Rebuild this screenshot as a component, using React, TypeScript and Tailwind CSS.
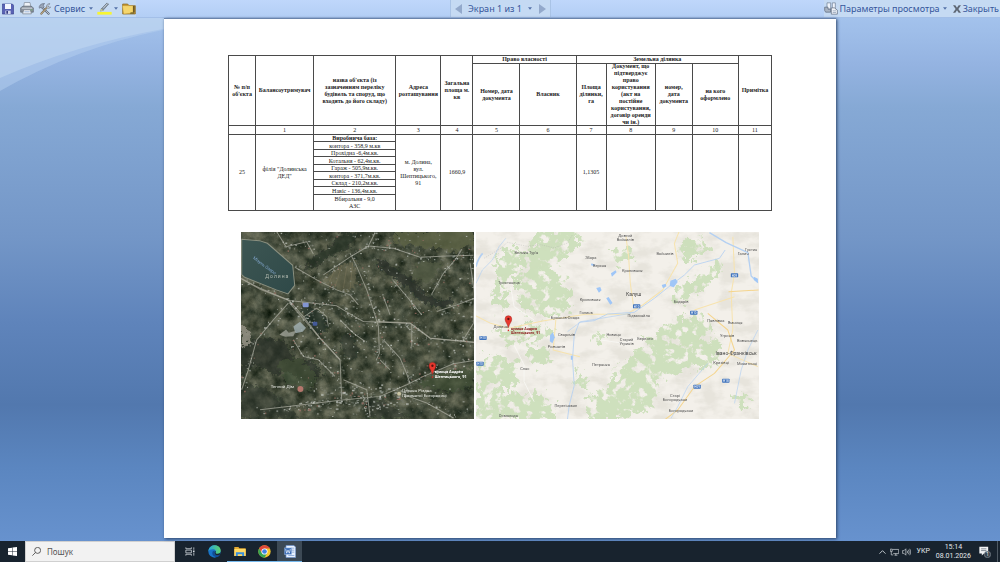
import type { ReactNode } from "react";

const columns = [27, 58, 82, 45, 32, 47, 56, 30, 49, 37, 46, 33];

const buildings = [
  "контора - 358,9 м.кв",
  "Прохідна -6,4м.кв.",
  "Котальня - 62,4м.кв.",
  "Гараж - 505,9м.кв.",
  "контора - 371,7м.кв.",
  "Склад - 210,2м.кв.",
  "Навіс - 136,4м.кв.",
];

const cell = "border border-[#4a4a4a] p-0 text-center align-middle";

const SaveIcon = () => (
  <svg viewBox="0 0 36 36" className="size-3" aria-hidden="true">
    <path d="M1 3h30l4 4v26H1z" fill="#5962b4" stroke="#3b438f" strokeWidth="2" />
    <path d="M9 3h18v15H9z" fill="#f3f5ff" />
    <path d="M10 23h16v10H10z" fill="#d3d8ee" />
    <path d="M13 24h5v8h-5z" fill="#333a80" />
  </svg>
);

const PrinterIcon = () => (
  <svg viewBox="0 0 42 38" className="h-[13px] w-3.5" aria-hidden="true">
    <path d="M11 15 13 1h17l3 14z" fill="#eef2f8" stroke="#7b8796" strokeWidth="2" />
    <path d="M2 17l7-5h24l7 5v13H2z" fill="#8a929d" stroke="#59616d" strokeWidth="2" />
    <path d="M5 18h32" stroke="#d6dbe2" strokeWidth="3" />
    <path d="M11 23h20l3 12H8z" fill="#f6f8fb" stroke="#6e7885" strokeWidth="2" />
    <path d="M13 29h16" stroke="#6b93c9" strokeWidth="2" />
    <circle cx="35" cy="23" r="2" fill="#68bf5b" />
  </svg>
);

const ToolsIcon = () => (
  <svg viewBox="0 0 40 36" className="h-3 w-3.5" fill="none" strokeLinecap="round" aria-hidden="true">
    <path d="M11 13 31 32" stroke="#59616e" strokeWidth="6" />
    <path d="M11 13 31 32" stroke="#c0c8d4" strokeWidth="3" />
    <path d="M28 11 9 32" stroke="#7c6d57" strokeWidth="6" />
    <path d="M28 11 9 32" stroke="#e2cda0" strokeWidth="2" />
    <path d="M3 10c2-6 9-9 16-8l-5 4 3 5-5 6-4-4-4 2z" fill="#9aa6b8" stroke="#626d7e" strokeWidth="2" />
    <path d="M34 2c-6-1-11 4-9 10s9 6 12 0l-6 1-3-4z" fill="#dfe6ef" stroke="#707b8c" strokeWidth="2" />
  </svg>
);

const PenIcon = () => (
  <svg viewBox="0 0 44 38" className="h-[13px] w-[15px]" aria-hidden="true">
    <path d="M1 29h42v8H1z" fill="#f7f531" />
    <path d="M13 20 29 3l5 3-15 17z" fill="#8e9aa7" stroke="#5c6873" strokeWidth="2" />
    <path d="m12 20 7 4-9 3z" fill="#e8e4a0" stroke="#606b60" strokeWidth="1" />
    <path d="m19 17 12-13" stroke="#dbe3ec" strokeWidth="2" />
  </svg>
);

const FolderIcon = () => (
  <svg viewBox="0 0 42 36" className="h-3 w-3.5" aria-hidden="true">
    <path d="M2 3h15l4 5h19v25H2z" fill="#c99a34" stroke="#7e611c" strokeWidth="2" />
    <path d="M1 8h32v22L5 33z" fill="#f5d66d" stroke="#b48a2b" strokeWidth="1" />
    <path d="M33 9v22l5-3V9z" fill="#6f5b25" />
    <path d="M26 28h10v5H24z" fill="#84702f" />
  </svg>
);

const ViewIcon = () => (
  <svg viewBox="0 0 42 38" className="h-[13px] w-3.5" aria-hidden="true">
    <path d="M9 2h11v19H9zM25 2h9v19h-9z" fill="#eef3fb" stroke="#68788f" strokeWidth="2" />
    <path d="M2 15h10v6h8v9H5l-3-5z" fill="#a8b3c2" stroke="#566477" strokeWidth="2" />
    <path d="M22 17h9l9 7v12H22z" fill="#f1f4f9" stroke="#566477" strokeWidth="2" />
    <path d="M26 26h10M26 31h10" stroke="#8495ad" strokeWidth="2" />
  </svg>
);

const Caret = () => (
  <svg viewBox="0 0 8 5" className="h-[3px] w-1" aria-hidden="true">
    <path d="M0 0h8L4 5z" fill="#5572a8" />
  </svg>
);

const WindowsLogo = () => (
  <svg viewBox="0 0 18 18" className="size-[9px]" fill="#fff" aria-hidden="true">
    <path d="M0 2.500 8 1.400v7.200H0zM9 1.200 18 0v8.600H9zM0 9.500h8v7.100l-8-1.100zM9 9.500h9V18l-9-1.200z" />
  </svg>
);

const TaskViewIcon = () => (
  <svg viewBox="0 0 28 26" className="h-[9px] w-2.5" fill="none" stroke="#e8edf2" strokeWidth="2" aria-hidden="true">
    <path d="M2 1v4h16V1M2 25v-4h16v4M2 9h16v8H2zM25 1v7M25 17v8" />
    <path d="M23 10h4v5h-4z" fill="#e8edf2" stroke="none" />
  </svg>
);

const EdgeIcon = () => (
  <svg viewBox="0 0 40 40" className="size-[13px]" aria-hidden="true">
    <defs>
      <linearGradient id="edgeTop" x1="0" x2="1">
        <stop stopColor="#25a5dd" />
        <stop offset="1" stopColor="#5fd36a" />
      </linearGradient>
    </defs>
    <circle cx="20" cy="20" r="19" fill="#1873c7" />
    <path d="M1 19C3 7 11 1 21 1c11 0 18 8 18 16 0 7-5 11-11 11-4 0-6-2-5-4 4-5 0-11-8-11C8 13 3 16 1 19z" fill="url(#edgeTop)" />
    <path d="M15 19c-5 8 1 18 13 18 4-1 7-3 9-7-8 4-19 1-18-8 0-2 1-3 2-4-2-1-4-1-6 1z" fill="#114c97" />
    <path d="M20 22c0-3 4-4 4-2l-1 4c0 4 10 5 15-1l-2 7c-8 4-17 0-16-8z" fill="#18222d" />
  </svg>
);

const ExplorerIcon = () => (
  <svg viewBox="0 0 38 32" className="h-[11px] w-3" aria-hidden="true">
    <path d="M1 2h13l3 4h20v24H1z" fill="#e3aa32" />
    <path d="M1 8h36v22H1z" fill="#ffd966" />
    <path d="M6 18h26v12h-6v-5H12v5H6z" fill="#398fdb" />
  </svg>
);

const ChromeIcon = () => (
  <svg viewBox="0 0 40 40" className="size-[13px]" aria-hidden="true">
    <circle cx="20" cy="20" r="19" fill="#f5c52c" />
    <path d="M3.500 10.500A19 19 0 0 1 36.500 10.500H20L11.800 24.800z" fill="#e0483a" />
    <path d="M3.500 10.500A19 19 0 0 0 20 39l8.200-14.200H11.800z" fill="#37a452" />
    <circle cx="20" cy="20" r="9.500" fill="#fff" />
    <circle cx="20" cy="20" r="7.200" fill="#3e82e4" />
  </svg>
);

const WordIcon = () => (
  <svg viewBox="0 0 36 38" className="h-[13px] w-3" aria-hidden="true">
    <path d="M6 1h24l5 5v31H6z" fill="#e8f1ff" stroke="#6990cc" strokeWidth="2" />
    <path d="M20 9h11M20 15h11M13 31h18M20 21h11" stroke="#6e93c8" strokeWidth="2" />
    <path d="M1 8h22v20H1z" fill="#3f70b8" stroke="#d8e7ff" strokeWidth="1" />
    <path d="m5 12 3 12 4-9 4 9 3-12" fill="none" stroke="#fff" strokeWidth="2" />
  </svg>
);

const Pin = ({ x, y }: { x: number; y: number }) => (
  <g transform={`translate(${x} ${y})`}>
    <path d="M0 0C-3-13-10-17-10-26a10 10 0 0 1 20 0C10-17 3-13 0 0z" fill="#e8382e" stroke="#a42720" strokeWidth="1.500" />
    <circle cy="-26" r="3.500" fill="#5e120f" />
    <circle cy="8" r="2.500" fill="#d22c25" />
  </g>
);

// small seeded generator, keeps the scattered houses in the same spots
const createRandom = (start: number) => {
  let seed = start;
  return () => {
    seed = (seed * 16807) % 2147483647;
    return seed / 2147483647;
  };
};

type Point = [number, number];

const streets: Point[][] = [
  [[0, 145], [60, 175], [148, 212], [290, 228], [340, 258], [370, 275], [510, 280], [570, 325], [705, 338]],
  [[148, 212], [190, 260], [240, 325], [300, 390], [305, 510]],
  [[330, 70], [350, 110], [380, 180], [400, 240], [415, 290], [418, 370], [408, 392]],
  [[165, 112], [230, 150], [290, 180], [330, 195], [355, 225]],
  [[405, 8], [385, 48], [335, 78], [250, 135]],
  [[385, 48], [460, 55], [540, 82], [620, 78], [700, 76]],
  [[575, 192], [610, 130], [645, 90], [665, 58]],
  [[460, 152], [500, 200], [545, 255]],
  [[60, 540], [150, 530], [300, 512], [420, 500], [500, 465], [550, 440], [640, 402], [703, 392]],
  [[145, 220], [100, 270], [50, 330], [25, 420], [5, 480]],
  [[110, 5], [138, 50], [200, 35], [220, 72]],
  [[190, 262], [230, 235], [260, 260], [265, 290]],
  [[430, 200], [450, 255]],
  [[430, 330], [480, 385], [500, 432], [510, 462]],
  [[515, 285], [515, 350]],
  [[590, 245], [650, 225], [703, 205]],
  [[690, 100], [703, 190], [700, 280], [668, 332]],
  [[500, 498], [560, 520], [640, 565]],
  [[300, 270], [340, 310], [375, 335]],
  [[160, 330], [190, 380], [235, 390], [285, 440]],
  [[420, 390], [450, 420]],
  [[310, 450], [380, 480], [390, 560]],
];

const buildHouses = () => {
  const random = createRandom(4217);
  const houses: { x: number; y: number; w: number; h: number; light: number }[] = [];
  streets.forEach((street) => {
    for (let i = 1; i < street.length; i++) {
      const [x1, y1] = street[i - 1];
      const [x2, y2] = street[i];
      const count = Math.round(Math.hypot(x2 - x1, y2 - y1) / 5);
      for (let n = 0; n < count; n++) {
        const t = random();
        houses.push({
          x: x1 + (x2 - x1) * t + (random() - 0.5) * 28,
          y: y1 + (y2 - y1) * t + (random() - 0.5) * 28,
          w: 2 + random() * 4,
          h: 2 + random() * 3,
          light: random(),
        });
      }
    }
  });
  for (let n = 0; n < 420; n++) {
    const x = 170 + random() * 530;
    const y = 10 + random() * 550;
    houses.push({ x, y, w: 2 + random() * 4, h: 2 + random() * 3, light: random() });
  }
  for (let n = 0; n < 130; n++) {
    houses.push({ x: 200 + random() * 300, y: 470 + random() * 70, w: 3 + random() * 6, h: 2 + random() * 5, light: random() });
  }
  return houses;
};

const houses = buildHouses();

const SatelliteMap = () => (
  <svg
    viewBox="3 6 700 562"
    preserveAspectRatio="none"
    className="h-[187px] w-0 grow-[233]"
    role="img"
    aria-label="Супутникова карта"
    fontFamily="Roboto, sans-serif"
  >
    <defs>
      <filter id="ground" x="0" y="0" width="100%" height="100%" colorInterpolationFilters="sRGB">
        <feTurbulence type="fractalNoise" baseFrequency="0.03" numOctaves="5" seed="8" />
        <feColorMatrix values="0.5 0.2 0 0 -0.07  0.45 0.2 0 0 -0.02  0.4 0.2 0 0 -0.06  0 0 0 0 1" />
      </filter>
      <filter id="rough" x="-20%" y="-20%" width="140%" height="140%">
        <feTurbulence type="fractalNoise" baseFrequency="0.08" numOctaves="4" seed="3" result="n" />
        <feDisplacementMap in="SourceGraphic" in2="n" scale="34" xChannelSelector="R" yChannelSelector="G" />
      </filter>
      <linearGradient id="lake" x1="0" x2="1" y2="1">
        <stop stopColor="#3d5653" />
        <stop offset="1" stopColor="#2f4948" />
      </linearGradient>
    </defs>
    <rect width="710" height="570" fill="#4a5343" />
    <rect width="710" height="570" filter="url(#ground)" opacity="0.9" />

    <g filter="url(#rough)">
      <path d="M462 5h240v38l-60 20-80-10-100-12z" fill="#5d6246" opacity="0.8" />
      <path d="m282 115 62-22 4 75-30 22-68-35z" fill="#6c6b52" opacity="0.6" />
      <path d="m540 90 70 10-40 60-60-20z" fill="#515a41" opacity="0.7" />
      <path d="m190 110 40-40 40-20 30-40h60l-45 50-55 22-40 38z" fill="#252e25" opacity="0.65" />
      <path d="m400 84 35 8 45 34 45 28 35 42 45 18 28-12 2 24-50 6-45-20-45-46-40-24-32-24z" fill="#27302a" opacity="0.7" />
      <path d="m0 345 60-20 70 5 28 50 62 20 30 35-40 25-60-30-50 5-50-30-50 40z" fill="#232c23" opacity="0.6" />
      <path d="m180 225 50 10 30 30 5 30-40 20-30-35z" fill="#222b23" opacity="0.6" />
      <path d="m0 460 80 15 60 50 40 40H0z" fill="#2a342a" opacity="0.5" />
      <path d="m300 320 30-10 25 45-10 40-35-20z" fill="#283129" opacity="0.5" />
      <path d="m380 500 60 15 60 50H380z" fill="#2a3429" opacity="0.5" />
      <path d="m110 395 70-10 50 45-10 50-80-15z" fill="#46553a" opacity="0.6" />
      <path d="m530 460 70-30 100-20v60l-80 20z" fill="#435239" opacity="0.7" />
      <path d="m3 285 20 10 10 35-30 25z" fill="#a19c92" opacity="0.7" />
    </g>
    <g stroke="#9a8d6c" strokeWidth="2" opacity="0.4">
      <path d="m270 120-20 35M288 112l-24 52M305 106l-20 65M322 100l-12 75M338 96l-8 82" />
    </g>

    <g fill="none" stroke="#a3a498" strokeWidth="3" opacity="0.8" strokeLinejoin="round">
      {streets.map((street, index) => (
        <polyline key={index} points={street.join(" ")} />
      ))}
    </g>
    <g fill="none" stroke="#adac9f" strokeWidth="4" opacity="0.6">
      <path d="M3 145 60 178l88 34M148 218l92 107 60 65M410 275l100 5 60 45 133 13" />
    </g>
    {houses.map((house, index) => (
      <rect
        key={index}
        x={house.x}
        y={house.y}
        width={house.w}
        height={house.h}
        fill={house.light > 0.93 ? "#9a6f64" : house.light > 0.45 ? "#c2c6c0" : "#868b82"}
        opacity={0.3 + house.light * 0.5}
      />
    ))}

    <path d="m5 28 53 4 24 8 76 66 6 60-20 26-35-12L14 142l-9-8z" fill="url(#lake)" stroke="#8b9080" strokeWidth="3" />
    <path d="m160 290 20-14 18 18-10 12-22 4z" fill="#a3b1b4" opacity="0.8" />
    <path d="m118 315 20-16 8 10 22-6-8 16-24 2z" fill="#a9aca3" opacity="0.7" />
    <rect x="188" y="219" width="18" height="13" rx="3" fill="#8295d2" />
    <rect x="218" y="276" width="14" height="12" rx="3" fill="#445a99" />
    <circle cx="181" cy="478" r="9" fill="#b4776c" />
    <circle cx="477" cy="492" r="6" fill="#c9c4a3" />

    <text x="38" y="86" fontSize="13" fill="#7fa3c8" transform="rotate(36 38 86)">
      Мізунь Озеро
    </text>
    <text x="76" y="143" fontSize="15" letterSpacing="3" fill="#b3bab0">
      Долина
    </text>
    <g fill="#e3e5df" fontSize="13">
      <text x="92" y="475">Теплий Дім</text>
      <text x="486" y="487">Церква Різдва</text>
      <text x="486" y="502">Пресвятої Богородиці</text>
    </g>
    <g fill="#fff" fontSize="12" fontWeight="700">
      <text x="584" y="431">вулиця Андрея</text>
      <text x="584" y="444">Шептицького, 91</text>
    </g>
    <Pin x={577} y={434} />
  </svg>
);

const towns: [number, number, string][] = [
  [453, 21, "Довгий"],
  [453, 33, "Войнилів"],
  [157, 71, "Велика Тур'я"],
  [350, 86, "Збора"],
  [376, 110, "Верхня"],
  [474, 127, "Кропивник"],
  [572, 75, "Войнилів"],
  [806, 75, "Галич"],
  [830, 62, "Густин"],
  [105, 162, "Тростянець"],
  [348, 214, "Кропивник"],
  [620, 218, "Бодарів"],
  [336, 252, "Голинь"],
  [273, 267, "Брошнів-Осада"],
  [493, 262, "Підмихайля"],
  [277, 317, "Сваричів"],
  [247, 354, "Рожнятів"],
  [418, 317, "Новиця"],
  [457, 332, "Старий"],
  [457, 344, "Угринів"],
  [512, 330, "Берлоги"],
  [724, 275, "Павлівка"],
  [782, 282, "Ямниця"],
  [758, 321, "Угринів"],
  [818, 337, "Вовчинець"],
  [740, 403, "Крихівці"],
  [818, 405, "Микитинці"],
  [380, 408, "Петранка"],
  [152, 420, "Спас"],
  [275, 530, "Перегінське"],
  [602, 501, "Старі"],
  [602, 513, "Богородчани"],
  [620, 546, "Богородчани"],
  [103, 562, "Осмолода"],
  [80, 295, "Долина"],
];

const shields: [number, number, string][] = [
  [780, 136, "H09"],
  [487, 229, "H10"],
  [658, 248, "H10"],
  [27, 324, "H10"],
  [18, 401, "H10"],
  [754, 452, "H18"],
  [668, 470, "H09"],
];

const RoadMap = () => (
  <svg
    viewBox="6 6 846 561"
    preserveAspectRatio="none"
    className="h-[187px] w-0 grow-[282]"
    role="img"
    aria-label="Карта району"
    fontFamily="Roboto, sans-serif"
  >
    <defs>
      <filter id="forest" x="-10%" y="-10%" width="120%" height="120%" colorInterpolationFilters="sRGB">
        <feTurbulence type="fractalNoise" baseFrequency="0.045" numOctaves="4" seed="12" result="n" />
        <feDisplacementMap in="SourceGraphic" in2="n" scale="70" xChannelSelector="R" yChannelSelector="G" result="shape" />
        <feTurbulence type="fractalNoise" baseFrequency="0.035" numOctaves="4" seed="31" />
        <feColorMatrix values="0 0 0 0 0  0 0 0 0 0  0 0 0 0 0  9 0 0 0 -3.2" result="holes" />
        <feComposite in="shape" in2="holes" operator="in" />
      </filter>
      <filter id="relief" x="0" y="0" width="100%" height="100%" colorInterpolationFilters="sRGB">
        <feTurbulence type="fractalNoise" baseFrequency="0.015 0.025" numOctaves="4" seed="5" />
        <feColorMatrix values="0 0 0 0 0.84  0 0 0 0 0.83  0 0 0 0 0.79  0 4 0 0 -1.8" />
      </filter>
    </defs>
    <rect width="860" height="570" fill="#f3f0ea" />
    <rect width="860" height="570" filter="url(#relief)" opacity="0.4" />

    <g fill="#cbdfb9" opacity="0.9" filter="url(#forest)">
      <path d="m190 0 130-10-5 60-70 50-80 25-30-25 30-50z" />
      <path d="m135 125 60-35 60 40 40 60-10 55-70 15-80-20-10-60z" />
      <path d="m60 80 70-30 15 50-60 80 20 50-30 20-25-60 20-50z" />
      <path d="m70 300 60-10 90-5 20 35-70 10-80 10z" />
      <path d="m20 385 60-10 55 30-15 60-60 20-50-20z" />
      <path d="m10 470 90 20 100 0 50 45-20 40H0z" />
      <path d="m170 350 50 10 10 40-40 10-40-30z" />
      <path d="m480 365 50-45 60-50 60-15 70 25-30 50-20 70-80 40-70 45-60 45-75 40 15-80-50 60z" />
      <path d="m400 470 90-100 60 40-20 90-60 60h-90z" />
      <path d="m340 500 70-40 50 50-20 60h-95z" />
      <path d="m310 420 25 5 5 50-25 10z" />
      <path d="m420 410 25-5 10 20-25 10z" />
      <path d="m620 40 60-15 30 35-60 30-40-10z" />
      <path d="m590 190 60-40 70-50 30 5-50 60-60 50-50 5z" />
      <path d="m400 70 60-20 30 30-60 20z" />
      <path d="m460 470 60-25 40 40-40 60-70-10z" />
      <path d="m350 330 25-25 15 20-25 20z" />
      <path d="m670 340 60-20 10 60-40 40-50-10z" />
      <path d="m780 500 30-10 20 40-30 20z" />
    </g>

    <g fill="none" stroke="#f7e3ae" strokeWidth="3" strokeLinejoin="round">
      <path d="M6 258 50 280l55 15 100-22 130-20 120 0 50-28 60-45 45-80-10-60 20-50" />
      <path d="M455 20l8 60 5 80 10 70M245 270l-8 90 80 20M775 20l5 110-10 60 5 110-15 70" />
      <path d="M852 180l-90 5M700 250l60 50 20 60-60 70-60 40-50 70-40 30" stroke="#f5d58e" />
      <path d="m760 370 90 40M780 200l-120 40" />
    </g>
    <path
      d="M30 85 80 55l20-18 60 12 40-5 40 10 40-15 15-25"
      fill="none"
      stroke="#aaa"
      strokeWidth="1"
      strokeDasharray="4 3"
    />
    <g fill="none" stroke="#fbfaf7" strokeWidth="2">
      <path d="m110 170 10 60 60 40M120 345l30 60 0 50 30 60M380 330l70 10 50-20" />
    </g>
    <g fill="none" stroke="#b4d0f2" strokeWidth="2" strokeLinejoin="round">
      <path d="M752 60 735 85l-75 20-30 30-40 30-50 40-60 42-80 5-40 20-45 5-15 40-5 70 5 80-15 60-5 40" strokeWidth="2.500" />
      <path d="M470 250l-90 15-60 10-40 30" />
      <path d="M6 160 25 120l30-30 20-40 20-25" />
      <path d="m705 8 50 30 65 30 10 70 20 20" strokeWidth="4" />
      <path d="M6 110c5-20 10-30 20-40" strokeWidth="5" />
      <path d="m850 300-30 60-20 60-20 100M700 400l-60 70-30 60-20 35" strokeWidth="2" />
    </g>
    <g fill="#9fc6f7">
      <path d="m228 315 8-8 6 15-7 18-8-6z" />
      <path d="m366 174 12-3 4 10-8 7zM396 205l7-4 12 18-7 5zM410 130l14-9 3 6-14 13zM588 152l16-6 6 10-12 16-12-4zM562 165l12-4 2 8-10 6z" />
      <path d="M290 377h5v12h-5zM352 100l10 4-2 4-10-2zM838 140l12 6v12l-12-8z" />
    </g>

    {shields.map(([x, y, name], index) => (
      <g key={index}>
        <rect x={x - 11} y={y - 6} width="22" height="12" rx="2" fill="#3f73bd" />
        <text x={x} y={y + 4} fontSize="9" textAnchor="middle" fill="#fff">
          {name}
        </text>
      </g>
    ))}
    <g fill="#555" fontSize="12" textAnchor="middle">
      {towns.map(([x, y, name], index) => (
        <text key={index} x={x} y={y}>
          {name}
        </text>
      ))}
    </g>
    <g fill="#444" fontSize="15" textAnchor="middle">
      <text x="478" y="198">Калуш</text>
      <text x="785" y="375">Івано-Франківськ</text>
    </g>
    <g fill="#8d1f1f" fontSize="11" fontWeight="700">
      <text x="111" y="300">вулиця Андрея</text>
      <text x="111" y="313">Шептицького, 91</text>
    </g>
    <Pin x={103} y={293} />
  </svg>
);

const Toolbar = () => (
  <header className="grid h-[18px] grid-cols-[1fr_auto_1fr] border-b border-[#a3bfe8] bg-linear-to-b from-[#bfd7fb] to-[#b3cef5] text-[9px] leading-[16px] text-[#35569b]">
    <div className="flex items-center gap-1 justify-self-start bg-[#c5daf3] pl-0.5">
      <button aria-label="Зберегти">
        <SaveIcon />
      </button>
      <button className="ml-0.5" aria-label="Друк">
        <PrinterIcon />
      </button>
      <button className="flex items-center gap-0.5">
        <ToolsIcon />
        Сервис
        <span className="ml-0.5">
          <Caret />
        </span>
      </button>
      <button className="flex items-center gap-0.5" aria-label="Маркер">
        <PenIcon />
        <Caret />
      </button>
      <button aria-label="Відкрити">
        <FolderIcon />
      </button>
    </div>

    <div className="flex w-[101px] items-center justify-between border-x border-[#a9c3e6] bg-[#c5daf3] px-1">
      <button aria-label="Назад">
        <svg viewBox="0 0 7 10" className="h-2.5 w-[7px]" aria-hidden="true">
          <path d="M7 0v10L0 5z" fill="#93a9cb" />
        </svg>
      </button>
      <button className="flex items-center gap-1.5">
        Экран 1 из 1
        <Caret />
      </button>
      <button aria-label="Вперед">
        <svg viewBox="0 0 7 10" className="h-2.5 w-[7px]" aria-hidden="true">
          <path d="M0 0v10l7-5z" fill="#93a9cb" />
        </svg>
      </button>
    </div>

    <div className="flex items-center gap-1.5 justify-self-end bg-[#c5daf3] pr-px">
      <button className="flex items-center gap-px">
        <ViewIcon />
        Параметры просмотра
        <span className="ml-0.5">
          <Caret />
        </span>
      </button>
      <button className="flex items-center gap-0.5">
        <svg viewBox="0 0 24 24" className="size-2" aria-hidden="true">
          <path d="M0 1h7l5 7 5-7h7l-8 11 8 11h-7l-5-7-5 7H0l8-11z" fill="#5e6774" />
        </svg>
        Закрыть
      </button>
    </div>
  </header>
);

const PropertyTable = () => (
  <table className="w-full table-fixed border-collapse font-['Liberation_Serif',serif] text-[6px] leading-[7px] text-[#222]">
    <colgroup>
      <col className="w-[27px]" />
      <col className="w-[58px]" />
      <col className="w-[82px]" />
      <col className="w-[45px]" />
      <col className="w-[32px]" />
      <col className="w-[47px]" />
      <col className="w-[56px]" />
      <col className="w-[30px]" />
      <col className="w-[49px]" />
      <col className="w-[37px]" />
      <col className="w-[46px]" />
      <col className="w-[33px]" />
    </colgroup>
    <thead>
      <tr>
        <th rowSpan={2} className={cell}>№ п/п об'єкта</th>
        <th rowSpan={2} className={cell}>Балансоутримувач</th>
        <th rowSpan={2} className={cell}>
          назва об'єкта (із
          <br />
          зазначенням переліку
          <br />
          будівель та споруд, що
          <br />
          входять до його складу)
        </th>
        <th rowSpan={2} className={cell}>Адреса розташування</th>
        <th rowSpan={2} className={cell}>
          Загальна
          <br />
          площа м.
          <br />
          кв
        </th>
        <th colSpan={2} className={cell}>Право власності</th>
        <th colSpan={4} className={cell}>Земельна ділянка</th>
        <th rowSpan={2} className={cell}>Примітка</th>
      </tr>
      <tr>
        <th className={cell}>Номер, дата документа</th>
        <th className={cell}>Власник</th>
        <th className={cell}>
          Площа
          <br />
          ділянки,
          <br />
          га
        </th>
        <th className={cell}>
          <div className="-my-px">
            Документ, що
            <br />
            підтверджує
            <br />
            право
            <br />
            користування
            <br />
            (акт на
            <br />
            постійне
            <br />
            користування,
            <br />
            договір оренди
            <br />
            чи ін.)
          </div>
        </th>
        <th className={cell}>
          номер,
          <br />
          дата
          <br />
          документа
        </th>
        <th className={cell}>
          на кого
          <br />
          оформлено
        </th>
      </tr>
    </thead>
    <tbody>
      <tr className="h-[9px]">
        {columns.map((_, index) => (
          <td key={index} className={cell}>
            {index > 0 && index}
          </td>
        ))}
      </tr>
      <tr className="h-[7px]">
        <td rowSpan={9} className={cell}>25</td>
        <td rowSpan={9} className={cell}>
          філія "Долинська
          <br />
          ДЕД"
        </td>
        <th className={`${cell} leading-[6px]`}>Виробнича база:</th>
        <td rowSpan={9} className={cell}>
          м. Долина,
          <br />
          вул.
          <br />
          Шептицького,
          <br />
          91
        </td>
        <td rowSpan={9} className={cell}>1660,9</td>
        <td rowSpan={9} className={cell} />
        <td rowSpan={9} className={cell} />
        <td rowSpan={9} className={cell}>1,1305</td>
        <td rowSpan={9} className={cell} />
        <td rowSpan={9} className={cell} />
        <td rowSpan={9} className={cell} />
        <td rowSpan={9} className={cell} />
      </tr>
      {buildings.map((building) => (
        <tr key={building} className="odd:h-[8px] even:h-[7px]">
          <td className={`${cell} leading-[6px]`}>{building}</td>
        </tr>
      ))}
      <tr className="h-4">
        <td className={cell}>
          Вбиральня - 9,0
          <br />
          АЗС
        </td>
      </tr>
    </tbody>
  </table>
);

const TaskButton = ({ label, state, children }: { label: string; state?: "open" | "active"; children: ReactNode }) => (
  <button
    aria-label={label}
    className={`flex w-[25px] items-center justify-center border-b ${
      state === "active"
        ? "border-[#76b9ed] bg-[#3c4955]"
        : state === "open"
          ? "border-[#76b9ed]"
          : "border-transparent"
    }`}
  >
    {children}
  </button>
);

const Taskbar = () => (
  <footer className="flex h-[21px] items-stretch bg-[#18232e] font-['Roboto',sans-serif] text-[7px] text-[#e4e8ec]">
    <button className="flex w-[25px] items-center justify-center" aria-label="Пуск">
      <WindowsLogo />
    </button>
    <label className="flex w-[150px] items-center gap-1.5 border border-[#d0d0d0] bg-[#f2f2f2] px-1.5">
      <svg viewBox="0 0 24 24" className="size-[9px] shrink-0" fill="none" stroke="#333" strokeWidth="2" aria-hidden="true">
        <circle cx="15" cy="9" r="8" />
        <path d="M9 15 1 23" />
      </svg>
      <input
        type="text"
        aria-label="Пошук"
        placeholder="Пошук"
        className="w-full min-w-0 bg-transparent font-['Noto_Sans',sans-serif] text-[8px] outline-none placeholder:text-[#555]"
      />
    </label>
    <nav className="ml-0.5 flex">
      <TaskButton label="Подання завдань">
        <TaskViewIcon />
      </TaskButton>
      <TaskButton label="Edge">
        <EdgeIcon />
      </TaskButton>
      <TaskButton label="Провідник" state="open">
        <ExplorerIcon />
      </TaskButton>
      <TaskButton label="Chrome" state="open">
        <ChromeIcon />
      </TaskButton>
      <TaskButton label="Word" state="active">
        <WordIcon />
      </TaskButton>
    </nav>

    <div className="ml-auto flex items-center">
      <svg viewBox="0 0 20 12" className="h-1 w-[7px]" fill="none" stroke="#dfe4e8" strokeWidth="2.500" aria-hidden="true">
        <path d="m1 11 9-9 9 9" />
      </svg>
      <svg viewBox="0 0 28 24" className="ml-1 h-2 w-[9px]" fill="none" stroke="#dfe4e8" strokeWidth="2" aria-hidden="true">
        <path d="M8 4h19v13H10M14 22h9M18 17v5M1 3h6v7H1zM4 10v11h6" />
      </svg>
      <svg viewBox="0 0 28 24" className="ml-[3px] h-2 w-[9px]" fill="none" stroke="#dfe4e8" strokeWidth="2" aria-hidden="true">
        <path d="M1 8h5l6-6v20l-6-6H1zM16 8q3 4 0 8M20 5q5 7 0 14M24 2q7 10 0 20" />
      </svg>
      <button className="ml-1.5">УКР</button>
      <div className="ml-1.5 text-center leading-[9px]">
        <div>15:14</div>
        <div>08.01.2026</div>
      </div>
      <button className="ml-2" aria-label="Сповіщення">
        <svg viewBox="0 0 34 34" className="size-3" aria-hidden="true">
          <path d="M1 2h25v19H14l-6 6v-6H1z" fill="#f1f3f5" />
          <path d="M6 8h15M6 13h15" stroke="#5a6570" strokeWidth="2" />
          <circle cx="24" cy="24" r="9" fill="#39444f" stroke="#9aa3ac" strokeWidth="1.500" />
          <text x="24" y="29" fontSize="13" textAnchor="middle" fill="#fff">
            1
          </text>
        </svg>
      </button>
      <span className="mr-0.5 ml-1.5 h-[21px] w-px bg-[#4e5963]" />
    </div>
  </footer>
);

export default function App() {
  return (
    <div className="flex min-h-screen flex-col font-['Noto_Sans','Open_Sans',sans-serif]">
      <Toolbar />
      <main className="relative flex flex-1 justify-center bg-[linear-gradient(#a3c2ec,#94b3e1_9%,#86a9d5_17%,#7396c7_42%,#5f84bb_58%,#5278ae_74%,#5b86c0_86%,#6792ce)] pb-[3px]">
        <svg viewBox="0 0 300 75" className="absolute top-0 left-0 h-[75px] w-[300px]" aria-hidden="true">
          <path d="M0 0h260L163 12Q75 30 0 73z" fill="#b5d0f0" opacity="0.5" />
          <path d="M0 0h250L163 11Q75 27 0 60z" fill="#c3d9f2" opacity="0.5" />
        </svg>
        <article className="relative w-full max-w-[672px] border-t border-[#6a84ac] bg-white px-16 pt-9 shadow-[1px_1px_3px_#2c4468]">
          <PropertyTable />
          <div className="mx-[13px] mt-[21px] flex gap-0.5">
            <SatelliteMap />
            <RoadMap />
          </div>
        </article>
      </main>
      <Taskbar />
    </div>
  );
}
